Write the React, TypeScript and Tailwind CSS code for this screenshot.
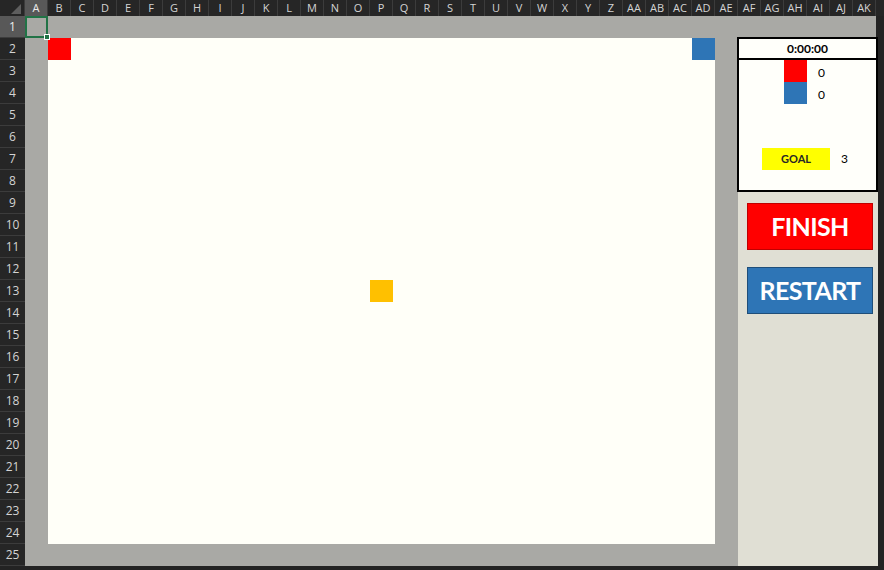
const cols = [
  'A','B','C','D','E','F','G','H','I','J','K','L','M','N','O','P','Q','R','S',
  'T','U','V','W','X','Y','Z','AA','AB','AC','AD','AE','AF','AG','AH','AI','AJ','AK',
]
const rows = Array.from({ length: 25 }, (_, i) => i + 1)

function ColumnHeader() {
  return (
    <div className="flex h-4 bg-[#262626]">
      <div className="relative w-[25px] shrink-0 border-r border-[#3c3c3c]">
        <div className="absolute right-[3px] bottom-[2px] h-0 w-0 border-b-[10px] border-l-[10px] border-b-[#5e5e5e] border-l-transparent" />
      </div>
      {cols.map((c) => (
        <div
          key={c}
          className={
            c === 'A'
              ? 'w-[23px] shrink-0 border-r border-[#3c3c3c] bg-[#585858] text-center text-[11px] leading-4 text-[#ececec]'
              : 'w-[23px] shrink-0 border-r border-[#3c3c3c] text-center text-[11px] leading-4 text-[#d4d4d4]'
          }
        >
          {c}
        </div>
      ))}
      <div className="flex-1" />
    </div>
  )
}

function RowHeader() {
  return (
    <div className="flex w-[25px] shrink-0 flex-col bg-[#262626]">
      {rows.map((r) => (
        <div
          key={r}
          className={
            r === 1
              ? 'flex h-[22px] items-center justify-center border-b border-[#3c3c3c] bg-[#585858] text-[12px] text-[#ececec]'
              : 'flex h-[22px] items-center justify-center border-b border-[#3c3c3c] text-[12px] text-[#d4d4d4]'
          }
        >
          {r}
        </div>
      ))}
    </div>
  )
}

function GameBoard() {
  // cols B..AC, rows 2..24 => 29 x 23 cells of 23x22
  return (
    <div className="relative h-[506px] w-[667px] bg-[#fffff8]">
      <div className="absolute left-0 top-0 h-[22px] w-[23px] bg-[#ff0000]" />
      <div className="absolute right-0 top-0 h-[22px] w-[23px] bg-[#2e75b6]" />
      <div className="absolute left-[322px] top-[242px] h-[22px] w-[23px] bg-[#ffc000]" />
    </div>
  )
}

function Scoreboard() {
  return (
    <div className="flex w-[140px] flex-col font-['Lato',sans-serif]">
      <div className="-mt-px -ml-px h-[155px] border-2 border-black bg-[#fffffa]">
        <div className="flex h-[21px] items-center justify-center border-b-2 border-black text-[12px] font-bold text-black">
          0:00:00
        </div>
        <div className="flex h-[22px] items-end">
          <div className="ml-[45px] h-[22px] w-[23px] bg-[#ff0000]" />
          <span className="ml-[11px] pb-px text-[12px] leading-4 text-black">0</span>
        </div>
        <div className="flex h-[22px] items-end">
          <div className="ml-[45px] h-[22px] w-[23px] bg-[#2e75b6]" />
          <span className="ml-[11px] pb-px text-[12px] leading-4 text-black">0</span>
        </div>
        <div className="mt-[44px] flex h-[22px] items-center">
          <div className="ml-[23px] flex h-[22px] w-[68px] items-center justify-center bg-[#ffff00] text-[11px] font-bold text-[#262626]">
            GOAL
          </div>
          <span className="ml-[11px] text-[12px] text-black">3</span>
        </div>
      </div>
      <button className="ml-[9px] mt-[11px] flex h-[47px] w-[126px] items-center justify-center border border-[#c00000] bg-[#ff0000] text-[25px] font-bold tracking-tight text-white">
        FINISH
      </button>
      <button className="ml-[9px] mt-[17px] flex h-[47px] w-[126px] items-center justify-center border border-[#1f4e79] bg-[#2e75b6] text-[25px] font-bold tracking-tight text-white">
        RESTART
      </button>
    </div>
  )
}

export default function App() {
  return (
    <div className="h-[570px] w-[884px] overflow-hidden bg-[#232323] font-['Open_Sans',sans-serif]">
      <ColumnHeader />
      <div className="flex">
        <RowHeader />
        <div className="relative flex w-[851px] shrink-0 flex-col bg-[#a9a9a5]">
          <div className="h-[22px]" />
          <div className="flex h-[528px]">
            <div className="w-[23px] shrink-0" />
            <div className="flex shrink-0 flex-col">
              <GameBoard />
            </div>
            <div className="w-[23px] shrink-0" />
            <div className="flex-1 bg-[#e0dfd4]">
              <Scoreboard />
            </div>
          </div>
          <div className="absolute left-0 top-0 h-[22px] w-[23px] border-2 border-[#217346]">
            <div className="absolute -bottom-[4px] -right-[4px] h-[6px] w-[6px] border border-white bg-[#217346]" />
          </div>
        </div>
      </div>
    </div>
  )
}
